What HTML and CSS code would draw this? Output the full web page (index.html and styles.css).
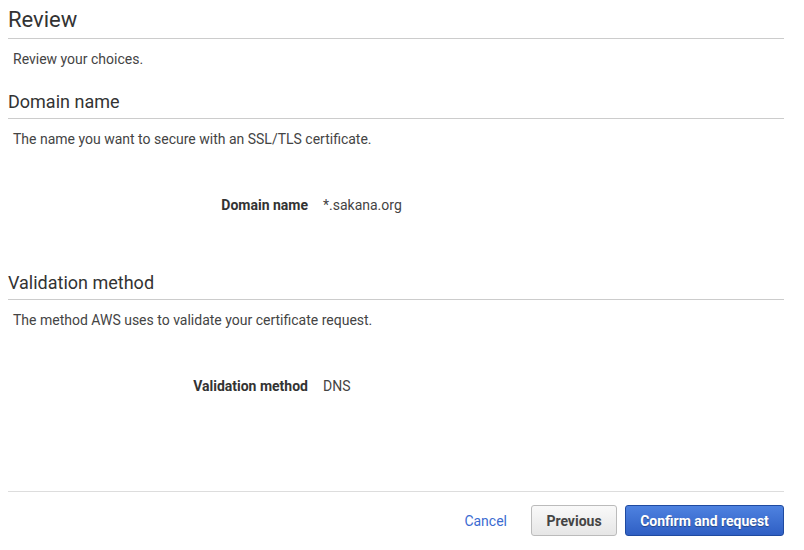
FILE: index.html
```html
<!DOCTYPE html>
<html lang="en">
<head>
  <meta charset="UTF-8" />
  <title>Review</title>
  <link rel="stylesheet" href="styles.css">
</head>
<body>
  <div class="page">
    <h1 class="title">Review</h1>
    <p class="desc">Review your choices.</p>

    <h2 class="section-title">Domain name</h2>
    <p class="desc">The name you want to secure with an SSL/TLS certificate.</p>
    <div class="row">
      <div class="label">Domain name</div>
      <div class="value">*.sakana.org</div>
    </div>

    <h2 class="section-title">Validation method</h2>
    <p class="desc">The method AWS uses to validate your certificate request.</p>
    <div class="row">
      <div class="label">Validation method</div>
      <div class="value">DNS</div>
    </div>

    <div class="footer">
      <a href="#" class="cancel">Cancel</a>
      <button class="btn btn-prev">Previous</button>
      <button class="btn btn-primary">Confirm and request</button>
    </div>
  </div>
</body>
</html>
```

FILE: styles.css
```css
body {
  margin: 0;
  font-family: Roboto, "Liberation Sans", sans-serif;
  font-size: 14px;
  color: #444;
  background: #fff;
}

.page {
  padding: 0 20px 0 8px;
}

.title {
  font-size: 22px;
  font-weight: 400;
  color: #333;
  margin: 0;
  padding: 7px 0 6px;
  border-bottom: 1px solid #ccc;
  line-height: 25px;
}

.desc {
  margin: 0;
  padding: 12px 5px 0;
  line-height: 17px;
}

.section-title {
  font-size: 18px;
  font-weight: 400;
  color: #333;
  margin: 23px 0 0;
  padding-bottom: 6px;
  border-bottom: 1px solid #ccc;
  line-height: 21px;
}

.row {
  display: flex;
  gap: 15px;
  padding: 49px 0 35px;
  line-height: 17px;
}

.label {
  width: 300px;
  text-align: right;
  font-weight: 700;
  color: #333;
}

.value {
  color: #444;
}

.footer {
  margin-top: 61px;
  border-top: 1px solid #ddd;
  display: flex;
  justify-content: flex-end;
  align-items: center;
  padding-top: 13px;
  gap: 8px;
}

.cancel {
  color: #3b6bd1;
  text-decoration: none;
  margin-right: 16px;
}

.btn {
  font-family: Roboto, "Liberation Sans", sans-serif;
  font-size: 14px;
  font-weight: 700;
  height: 31px;
  padding: 0 14px;
  border-radius: 3px;
  cursor: pointer;
}

.btn-prev {
  width: 86px;
  color: #444;
  background: linear-gradient(#f9f9f9, #e6e6e6);
  border: 1px solid #bbb;
}

.btn-primary {
  width: 159px;
  color: #fff;
  background: linear-gradient(#4e82e0, #2f5fc4);
  border: 1px solid #1f4aa0;
  text-shadow: 0 1px 1px rgba(0,0,0,0.35);
}
```
